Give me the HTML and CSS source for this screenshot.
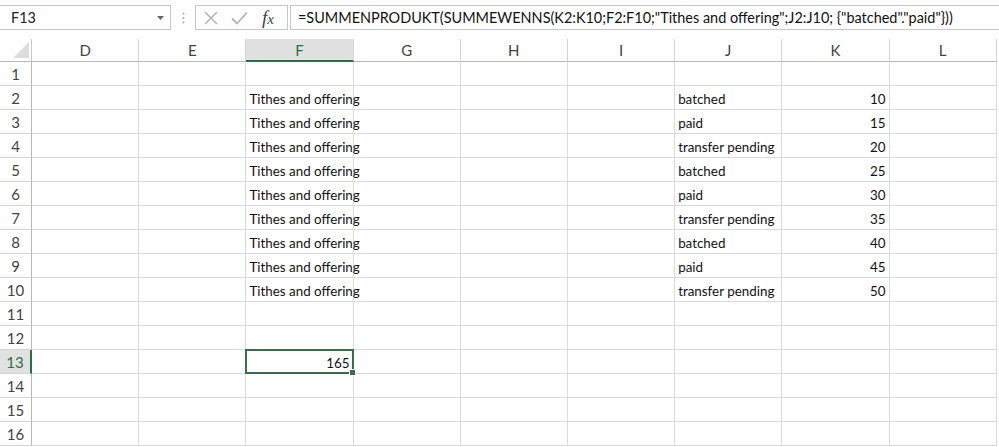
FILE: index.html
```html
<!DOCTYPE html>
<html>
<head>
<meta charset="utf-8">
<link rel="stylesheet" href="styles.css">
</head>
<body>
<div class="toolbar">
  <div class="namebox">
    <span class="nb-text">F13</span>
    <svg class="caret" width="7" height="4" viewBox="0 0 7 4"><path d="M0 0H7L3.5 4Z" fill="#666"/></svg>
  </div>
  <div class="grip">
    <svg width="3" height="12" viewBox="0 0 3 12"><circle cx="1.5" cy="1.5" r="1" fill="#a8a8a8"/><circle cx="1.5" cy="6" r="1" fill="#a8a8a8"/><circle cx="1.5" cy="10.5" r="1" fill="#a8a8a8"/></svg>
  </div>
  <div class="fbtns">
    <svg class="ico" width="16" height="16" viewBox="0 0 16 16"><path d="M2 2L14 14M14 2L2 14" stroke="#b4b4b4" stroke-width="1.6" fill="none"/></svg>
    <svg class="ico" width="17" height="16" viewBox="0 0 17 16"><path d="M1 8.5L6 13.5L16 2.5" stroke="#b4b4b4" stroke-width="1.8" fill="none"/></svg>
    <span class="fx">f<span class="fxx">x</span></span>
  </div>
  <div class="formula">=SUMMENPRODUKT(SUMMEWENNS(K2:K10;F2:F10;"Tithes and offering";J2:J10; {"batched"."paid"}))</div>
</div>

<div class="sheet">
  <div class="row head">
    <div class="corner"><svg width="16" height="16" viewBox="0 0 16 16"><path d="M16 0V16H0Z" fill="#dcdcdc"/></svg></div>
    <div class="ch">D</div><div class="ch">E</div><div class="ch sel">F</div><div class="ch">G</div><div class="ch">H</div><div class="ch">I</div><div class="ch">J</div><div class="ch">K</div><div class="ch">L</div>
  </div>
  <div class="row"><div class="rh">1</div><div class="c"></div><div class="c"></div><div class="c"></div><div class="c"></div><div class="c"></div><div class="c"></div><div class="c"></div><div class="c"></div><div class="c"></div></div>
  <div class="row"><div class="rh">2</div><div class="c"></div><div class="c"></div><div class="c">Tithes and offering</div><div class="c"></div><div class="c"></div><div class="c"></div><div class="c">batched</div><div class="c num">10</div><div class="c"></div></div>
  <div class="row"><div class="rh">3</div><div class="c"></div><div class="c"></div><div class="c">Tithes and offering</div><div class="c"></div><div class="c"></div><div class="c"></div><div class="c">paid</div><div class="c num">15</div><div class="c"></div></div>
  <div class="row"><div class="rh">4</div><div class="c"></div><div class="c"></div><div class="c">Tithes and offering</div><div class="c"></div><div class="c"></div><div class="c"></div><div class="c">transfer pending</div><div class="c num">20</div><div class="c"></div></div>
  <div class="row"><div class="rh">5</div><div class="c"></div><div class="c"></div><div class="c">Tithes and offering</div><div class="c"></div><div class="c"></div><div class="c"></div><div class="c">batched</div><div class="c num">25</div><div class="c"></div></div>
  <div class="row"><div class="rh">6</div><div class="c"></div><div class="c"></div><div class="c">Tithes and offering</div><div class="c"></div><div class="c"></div><div class="c"></div><div class="c">paid</div><div class="c num">30</div><div class="c"></div></div>
  <div class="row"><div class="rh">7</div><div class="c"></div><div class="c"></div><div class="c">Tithes and offering</div><div class="c"></div><div class="c"></div><div class="c"></div><div class="c">transfer pending</div><div class="c num">35</div><div class="c"></div></div>
  <div class="row"><div class="rh">8</div><div class="c"></div><div class="c"></div><div class="c">Tithes and offering</div><div class="c"></div><div class="c"></div><div class="c"></div><div class="c">batched</div><div class="c num">40</div><div class="c"></div></div>
  <div class="row"><div class="rh">9</div><div class="c"></div><div class="c"></div><div class="c">Tithes and offering</div><div class="c"></div><div class="c"></div><div class="c"></div><div class="c">paid</div><div class="c num">45</div><div class="c"></div></div>
  <div class="row"><div class="rh">10</div><div class="c"></div><div class="c"></div><div class="c">Tithes and offering</div><div class="c"></div><div class="c"></div><div class="c"></div><div class="c">transfer pending</div><div class="c num">50</div><div class="c"></div></div>
  <div class="row"><div class="rh">11</div><div class="c"></div><div class="c"></div><div class="c"></div><div class="c"></div><div class="c"></div><div class="c"></div><div class="c"></div><div class="c"></div><div class="c"></div></div>
  <div class="row"><div class="rh">12</div><div class="c"></div><div class="c"></div><div class="c"></div><div class="c"></div><div class="c"></div><div class="c"></div><div class="c"></div><div class="c"></div><div class="c"></div></div>
  <div class="row"><div class="rh rsel">13</div><div class="c"></div><div class="c"></div><div class="c num active">165<span class="handle"></span></div><div class="c"></div><div class="c"></div><div class="c"></div><div class="c"></div><div class="c"></div><div class="c"></div></div>
  <div class="row"><div class="rh">14</div><div class="c"></div><div class="c"></div><div class="c"></div><div class="c"></div><div class="c"></div><div class="c"></div><div class="c"></div><div class="c"></div><div class="c"></div></div>
  <div class="row"><div class="rh">15</div><div class="c"></div><div class="c"></div><div class="c"></div><div class="c"></div><div class="c"></div><div class="c"></div><div class="c"></div><div class="c"></div><div class="c"></div></div>
  <div class="row"><div class="rh">16</div><div class="c"></div><div class="c"></div><div class="c"></div><div class="c"></div><div class="c"></div><div class="c"></div><div class="c"></div><div class="c"></div><div class="c"></div></div>
</div>
</body>
</html>
```

FILE: styles.css
```css
html, body {
  margin: 0;
  padding: 0;
  background: #ffffff;
  overflow: hidden;
}
body {
  font-family: "Lato", "Liberation Sans", sans-serif;
  color: #000;
  width: 999px;
  height: 447px;
}

/* ---------- formula bar ---------- */
.toolbar {
  display: flex;
  align-items: stretch;
  height: 25px;
  padding: 5px 0 9px 0;
  background: #ffffff;
}
.namebox {
  box-sizing: border-box;
  width: 172px;
  margin-left: -1px;
  border: 1px solid #c6c6c6;
  display: flex;
  align-items: center;
  justify-content: space-between;
  padding: 0 6px 0 11px;
  font-size: 14.4px;
  color: #222;
}
.caret { margin-top: 1px; }
.grip {
  width: 24px;
  display: flex;
  align-items: center;
  justify-content: center;
}
.fbtns {
  box-sizing: border-box;
  width: 93px;
  border: 1px solid #c6c6c6;
  display: flex;
  align-items: center;
  gap: 12px;
  padding-left: 7px;
}
.fx {
  font-family: "Liberation Serif", "DejaVu Serif", serif;
  font-style: italic;
  font-size: 19px;
  color: #444;
  line-height: 1;
  margin-left: 2px;
}
.fxx { font-size: 15px; }
.formula {
  box-sizing: border-box;
  flex: 1;
  margin-left: 2px;
  margin-right: -2px;
  border: 1px solid #c6c6c6;
  display: flex;
  align-items: center;
  padding-left: 7px;
  font-size: 14.45px;
  color: #111;
  white-space: nowrap;
}

/* ---------- grid ---------- */
.sheet {
  display: flex;
  flex-direction: column;
}
.row {
  display: grid;
  grid-template-columns: 32px repeat(9, 107.2px);
  height: 24px;
}
.row.head {
  height: 23px;
}
.corner, .ch, .rh, .c {
  box-sizing: border-box;
}
.corner {
  border-right: 1px solid #c8c8c8;
  border-bottom: 1px solid #b8b8b8;
  display: flex;
  align-items: flex-end;
  justify-content: flex-end;
  padding: 0 2px 3px 0;
}
.ch {
  border-right: 1px solid #d4d4d4;
  border-bottom: 1px solid #b8b8b8;
  font-size: 15px;
  color: #444;
  display: flex;
  align-items: center;
  justify-content: center;
}
.ch.sel {
  background: #e1e1e1;
  border-bottom: 2px solid #217346;
  color: #217346;
}
.rh {
  border-right: 1px solid #b8b8b8;
  border-bottom: 1px solid #d4d4d4;
  font-size: 15px;
  color: #444;
  display: flex;
  align-items: center;
  justify-content: center;
  padding-top: 1px;
}
.rh.rsel {
  background: #e1e1e1;
  border-right: 2px solid #217346;
  color: #217346;
}
.c {
  border-right: 1px solid #dadada;
  border-bottom: 1px solid #dadada;
  font-size: 13.4px;
  color: #111;
  display: flex;
  align-items: center;
  padding: 3px 3px 0 3px;
  white-space: nowrap;
}
.c.num {
  justify-content: flex-end;
}
.c.active {
  position: relative;
  border-color: transparent;
}
.c.active::after {
  content: "";
  position: absolute;
  left: -1px;
  top: -1px;
  right: -1px;
  bottom: -1px;
  border: 2px solid #3d6b4f;
}
.handle {
  position: absolute;
  right: -3px;
  bottom: -3px;
  width: 5px;
  height: 5px;
  background: #3d6b4f;
  border: 1px solid #fff;
  z-index: 2;
}
```
